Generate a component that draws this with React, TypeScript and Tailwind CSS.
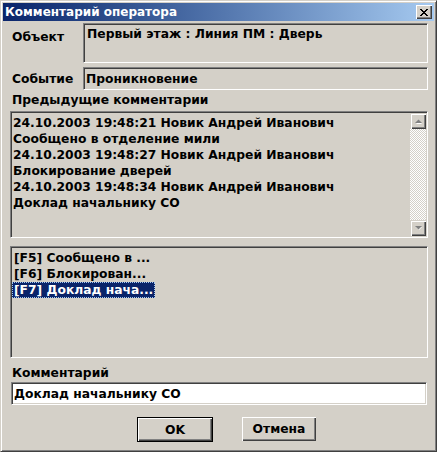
import React from "react";

const comments = [
  "24.10.2003 19:48:21 Новик Андрей Иванович",
  "Сообщено в отделение мили",
  "24.10.2003 19:48:27 Новик Андрей Иванович",
  "Блокирование дверей",
  "24.10.2003 19:48:34 Новик Андрей Иванович",
  "Доклад начальнику СО",
];

const quick = [
  { label: "[F5] Сообщено в ...", selected: false },
  { label: "[F6] Блокирован...", selected: false },
  { label: "[F7] Доклад нача...", selected: true },
];

const sunken =
  "border border-t-[#808080] border-l-[#808080] border-b-white border-r-white shadow-[inset_1px_1px_0_#404040,inset_-1px_-1px_0_#d4d0c8]";

function ScrollArrow({ up }: { up: boolean }) {
  return (
    <div className="flex h-[16px] w-[16px] items-center justify-center bg-[#d4d0c8] shadow-[inset_1px_1px_0_#d4d0c8,inset_2px_2px_0_#ffffff,inset_-1px_-1px_0_#404040,inset_-2px_-2px_0_#808080]">
      <svg width="7" height="5" viewBox="0 0 7 5">
        {up ? (
          <>
            <path d="M1 5 L4 2 L7 5 Z" fill="#ffffff" />
            <path d="M0 4 L3.5 0.5 L7 4 Z" fill="#808080" />
          </>
        ) : (
          <>
            <path d="M1 1 L4 4 L7 1 Z" fill="#ffffff" />
            <path d="M0 0 L3.5 3.5 L7 0 Z" fill="#808080" />
          </>
        )}
      </svg>
    </div>
  );
}

export default function App() {
  return (
    <div className="flex h-[452px] w-[437px] flex-col border border-t-[#d4d0c8] border-l-[#d4d0c8] border-r-[#404040] border-b-[#404040] bg-[#d4d0c8] p-[2px] font-['DejaVu_Sans',sans-serif] text-[12.3px] font-bold leading-[16px] text-black shadow-[inset_1px_1px_0_#ffffff,inset_-1px_-1px_0_#808080]">
      {/* title bar */}
      <div className="flex h-[18px] items-center justify-between bg-gradient-to-r from-[#0a246a] to-[#a6caf0] pl-[2px] pr-[2px]">
        <span className="text-[12px] font-bold text-white">Комментарий оператора</span>
        <div className="flex h-[14px] w-[16px] items-center justify-center bg-[#d4d0c8] shadow-[inset_1px_1px_0_#ffffff,inset_-1px_-1px_0_#404040,inset_-2px_-2px_0_#808080]">
          <svg width="8" height="7" viewBox="0 0 8 7" shapeRendering="crispEdges">
            <path
              d="M0 0h2v1h-2z M6 0h2v1h-2z M1 1h2v1h-2z M5 1h2v1h-2z M2 2h4v1h-4z M3 3h2v1h-2z M2 4h4v1h-4z M1 5h2v1h-2z M5 5h2v1h-2z M0 6h2v1h-2z M6 6h2v1h-2z"
              fill="#000000"
            />
          </svg>
        </div>
      </div>

      <div className="flex flex-1 flex-col pl-[7px] pr-[6px]">
        {/* Объект */}
        <div className="mt-[2px] flex h-[40px]">
          <div className="w-[73px] pl-[2px] pt-[6px]">Объект</div>
          <div className={`flex-1 ${sunken} px-[3px] pt-[2px]`}>Первый этаж : Линия ПМ : Дверь</div>
        </div>

        {/* Событие */}
        <div className="mt-[4px] flex h-[23px] items-center">
          <div className="w-[73px] pl-[2px]">Событие</div>
          <div className={`flex h-full flex-1 items-center ${sunken} px-[2px]`}>Проникновение</div>
        </div>

        <div className="mt-[2px] h-[16px] pl-[2px]">Предыдущие комментарии</div>

        {/* previous comments */}
        <div className={`mt-[3px] flex h-[127px] ${sunken} p-[1px]`}>
          <div className="flex-1 pl-[1px] pt-[2px]">
            {comments.map((c, i) => (
              <div key={i} className="h-[16px] whitespace-nowrap">
                {c}
              </div>
            ))}
          </div>
          <div className="flex w-[16px] flex-col">
            <ScrollArrow up />
            <div className="flex-1 bg-[image:repeating-conic-gradient(#d4d0c8_0%_25%,#ffffff_0%_50%)] bg-[length:2px_2px]" />
            <ScrollArrow up={false} />
          </div>
        </div>

        {/* quick comments */}
        <div className={`mt-[8px] h-[112px] ${sunken} pl-[1px] pt-[3px]`}>
          {quick.map((q) => (
            <div key={q.label} className="h-[16px]">
              <span
                className={
                  q.selected
                    ? "inline-block h-[16px] bg-[#0a246a] px-[2px] text-white outline outline-1 outline-dotted outline-[#a6caf0] -outline-offset-1"
                    : "inline-block h-[16px] px-[2px]"
                }
              >
                {q.label}
              </span>
            </div>
          ))}
        </div>

        <div className="mt-[7px] h-[16px] pl-[2px]">Комментарий</div>
        <div className={`mx-[1px] mt-[1px] flex h-[23px] items-center bg-white ${sunken} px-[2px]`}>
          Доклад начальнику СО
        </div>

        {/* buttons */}
        <div className="ml-[127px] mt-[12px] flex gap-[29px]">
          <div className="h-[25px] w-[76px] border border-black">
            <div className="flex h-full w-full items-center justify-center shadow-[inset_1px_1px_0_#ffffff,inset_-1px_-1px_0_#404040,inset_-2px_-2px_0_#808080]">
              OK
            </div>
          </div>
          <div className="flex h-[24px] w-[74px] items-center justify-center shadow-[inset_1px_1px_0_#ffffff,inset_-1px_-1px_0_#404040,inset_-2px_-2px_0_#808080]">
            Отмена
          </div>
        </div>
      </div>
    </div>
  );
}
